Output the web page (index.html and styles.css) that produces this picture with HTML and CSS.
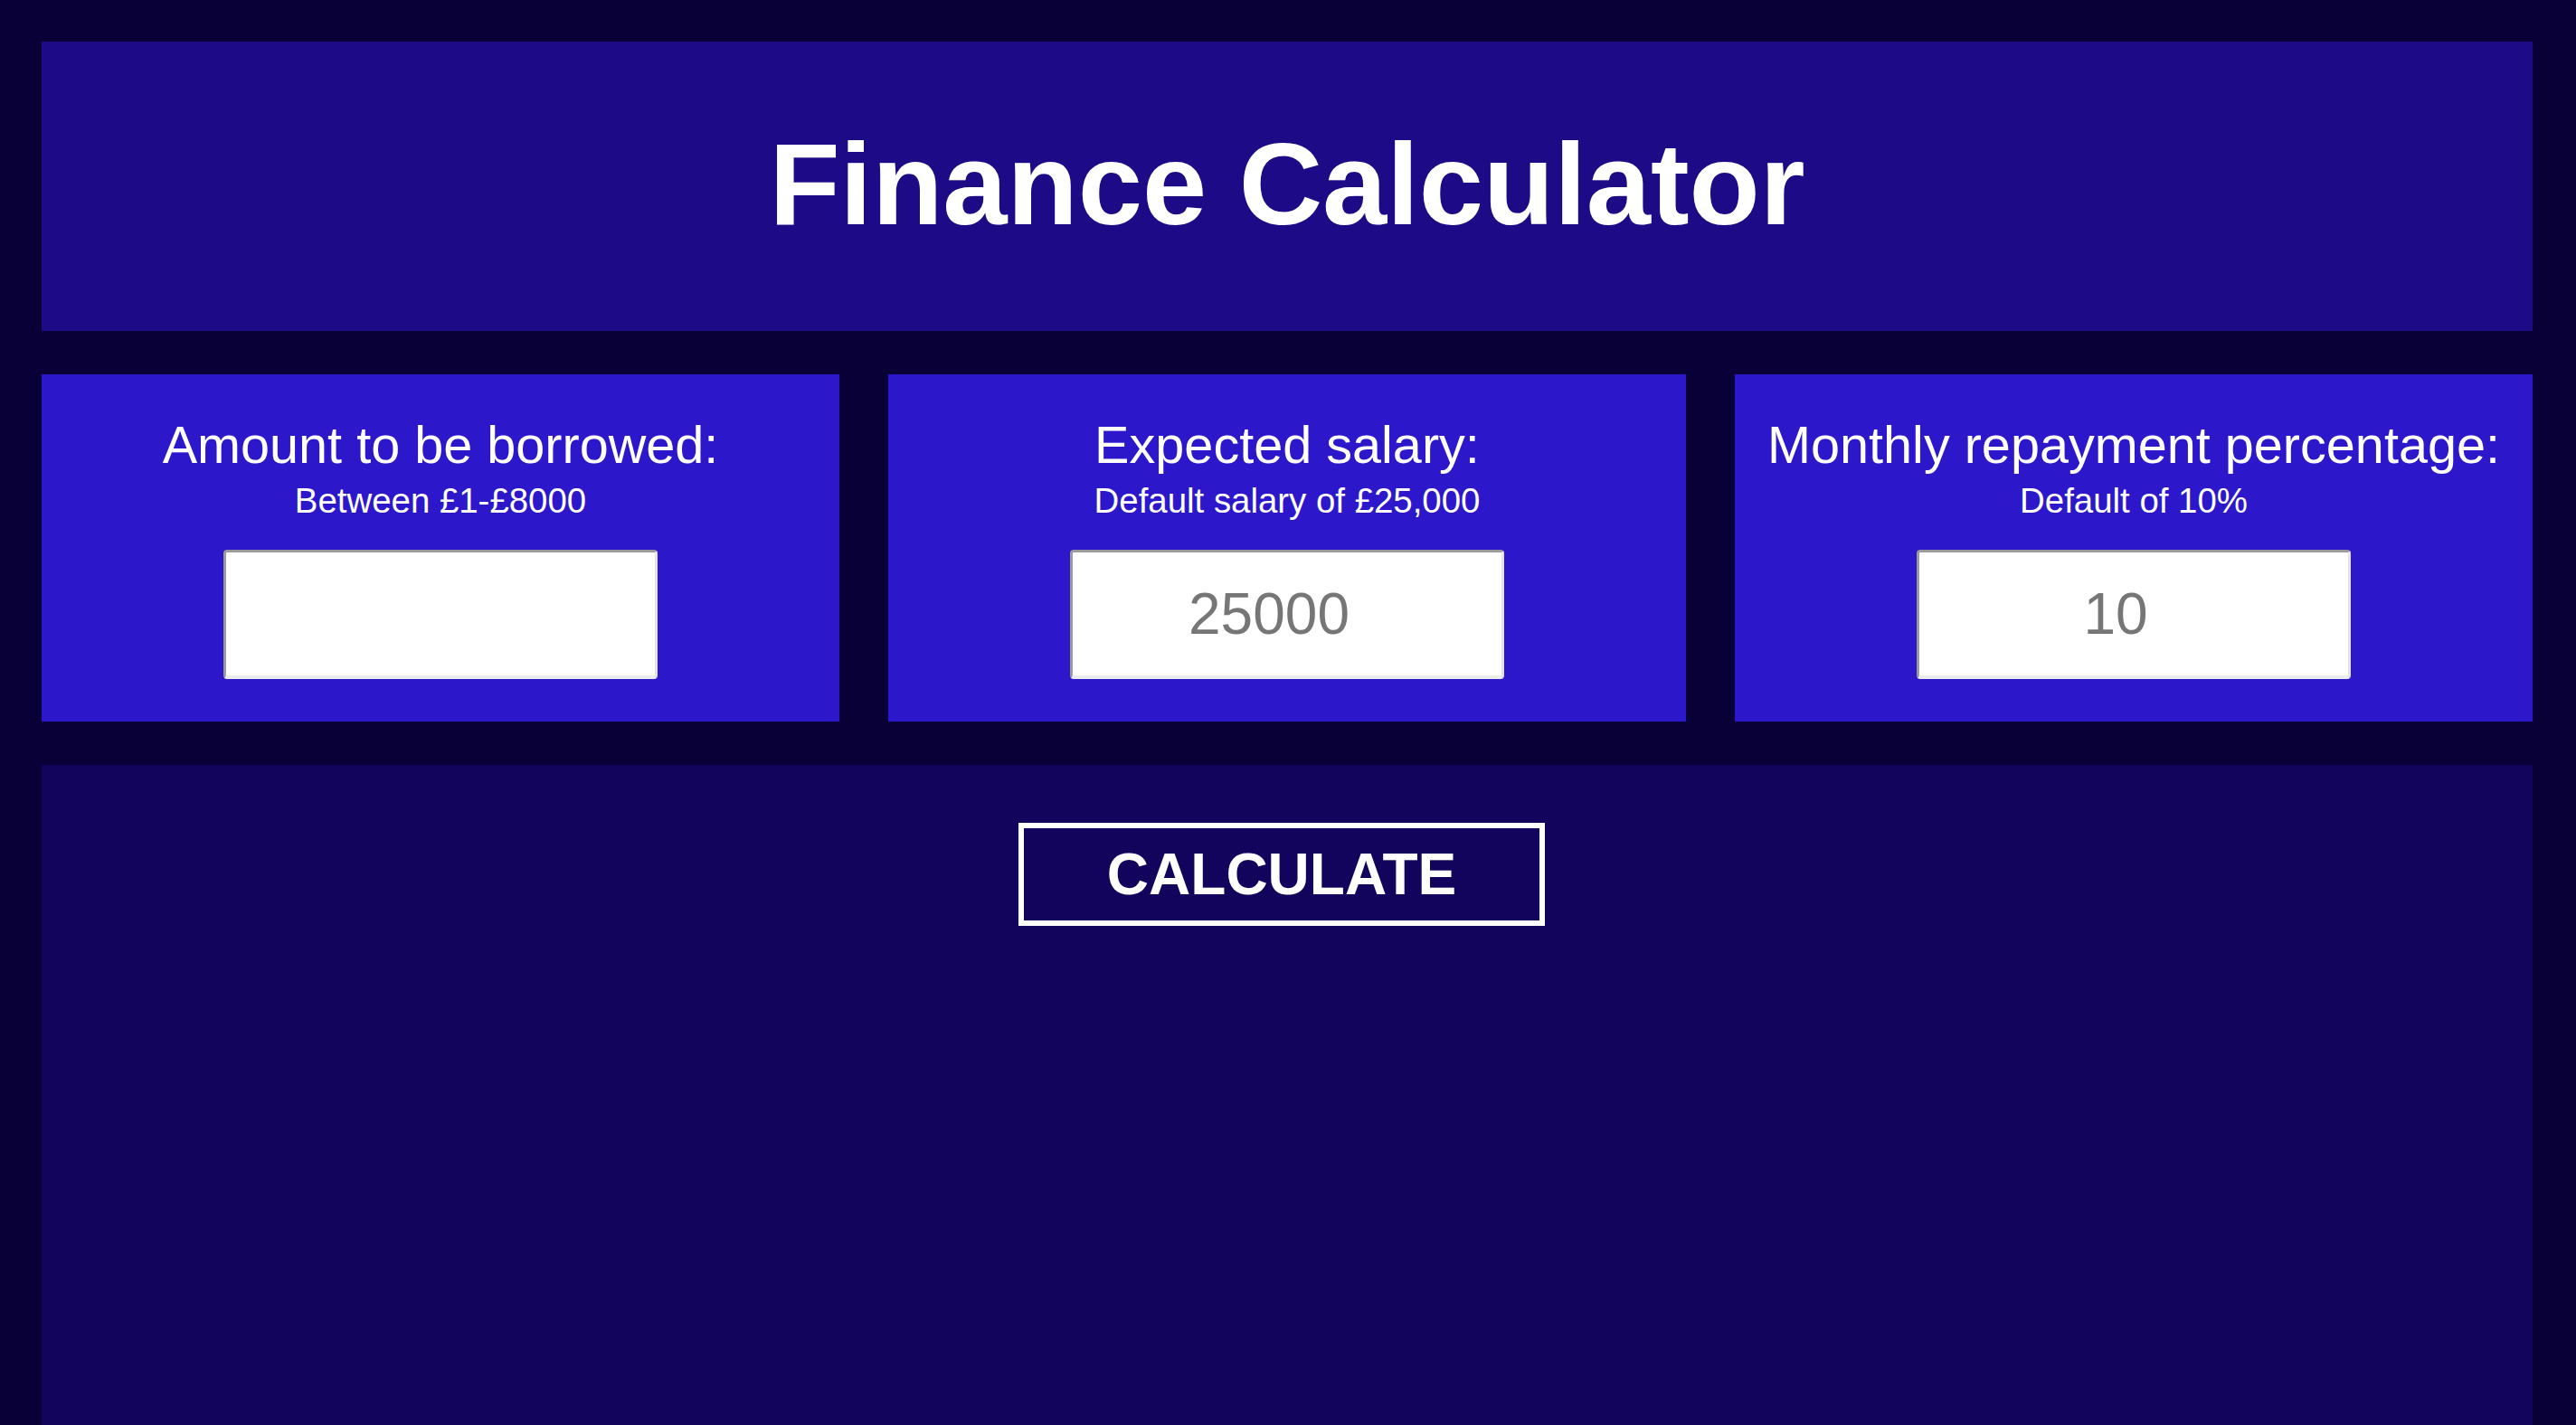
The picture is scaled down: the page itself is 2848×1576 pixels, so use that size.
FILE: index.html
```html
<!DOCTYPE html>
<html lang="en">
<head>
<meta charset="utf-8">
<title>Finance Calculator</title>
<link rel="stylesheet" href="styles.css">
</head>
<body>
<div class="page">
  <header class="banner">
    <h1 class="banner-title">Finance Calculator</h1>
  </header>
  <section class="inputs">
    <div class="card">
      <h2 class="card-label">Amount to be borrowed:</h2>
      <p class="card-hint">Between £1-£8000</p>
      <input class="card-input" type="text" value="">
    </div>
    <div class="card">
      <h2 class="card-label">Expected salary:</h2>
      <p class="card-hint">Default salary of £25,000</p>
      <input class="card-input" type="text" value="25000">
    </div>
    <div class="card">
      <h2 class="card-label">Monthly repayment percentage:</h2>
      <p class="card-hint">Default of 10%</p>
      <input class="card-input" type="text" value="10">
    </div>
  </section>
  <section class="results">
    <button class="calc-btn" type="button">CALCULATE</button>
  </section>
</div>
</body>
</html>
```

FILE: styles.css
```css
html, body {
  margin: 0;
  padding: 0;
  background: #080037;
  overflow: hidden;
}

body {
  font-family: "Liberation Sans", Arial, Helvetica, sans-serif;
  color: #ffffff;
}

.page {
  padding: 46px 48px 0 46px;
  display: flex;
  flex-direction: column;
  gap: 48px;
}

.banner {
  background: #1d0a87;
  padding: 81px 0 85px;
  text-align: center;
}

.banner-title {
  margin: 0;
  font-size: 128px;
  line-height: 154px;
  font-weight: 700;
}

.inputs {
  display: grid;
  grid-template-columns: repeat(3, 1fr);
  gap: 54px;
}

.card {
  background: #2c17cb;
  padding: 44px 0 47px;
  display: flex;
  flex-direction: column;
  align-items: center;
  text-align: center;
}

.card-label {
  margin: 0;
  font-size: 57.6px;
  line-height: 69px;
  font-weight: 400;
  white-space: nowrap;
}

.card-hint {
  margin: 4px 0 0;
  font-size: 38.4px;
  line-height: 46px;
}

.card-input {
  box-sizing: border-box;
  margin-top: 31px;
  width: 480px;
  height: 143px;
  background: #ffffff;
  border-style: solid;
  border-width: 3px 3px 4px 3px;
  border-color: #9b9b9b #e4e4e4 #ececec #9b9b9b;
  border-radius: 4px;
  padding: 0 40px 0 0;
  font-family: "Liberation Sans", Arial, Helvetica, sans-serif;
  font-size: 64px;
  color: #767676;
  text-align: center;
  outline: none;
}

.results {
  box-sizing: border-box;
  background: #12045c;
  min-height: 730px;
  display: flex;
  flex-direction: column;
  align-items: center;
  padding-top: 64px;
}

.calc-btn {
  background: transparent;
  border: 6px solid #ffffff;
  color: #ffffff;
  font-family: "Liberation Sans", Arial, Helvetica, sans-serif;
  font-weight: 700;
  font-size: 64px;
  line-height: 64px;
  padding: 19px 92px;
  margin-right: 12px;
  cursor: pointer;
}
```
